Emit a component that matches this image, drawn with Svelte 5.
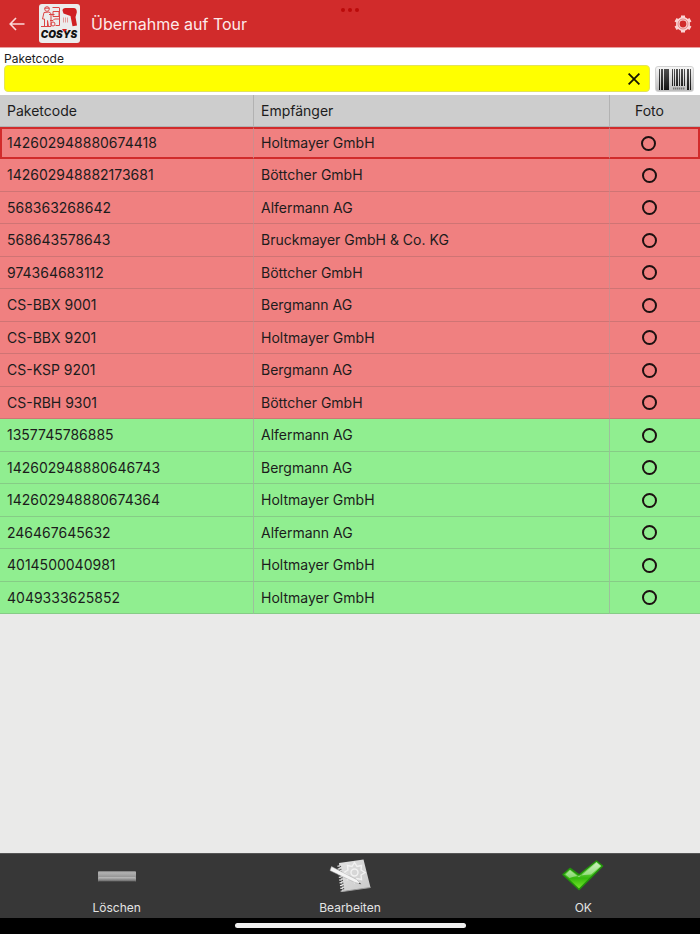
<script>
	let code = $state('');
	let selected = $state('142602948880674418');

	let parcels = $state([
		{ code: '142602948880674418', receiver: 'Holtmayer GmbH', loaded: false, photo: false },
		{ code: '142602948882173681', receiver: 'Böttcher GmbH', loaded: false, photo: false },
		{ code: '568363268642', receiver: 'Alfermann AG', loaded: false, photo: false },
		{ code: '568643578643', receiver: 'Bruckmayer GmbH & Co. KG', loaded: false, photo: false },
		{ code: '974364683112', receiver: 'Böttcher GmbH', loaded: false, photo: false },
		{ code: 'CS-BBX 9001', receiver: 'Bergmann AG', loaded: false, photo: false },
		{ code: 'CS-BBX 9201', receiver: 'Holtmayer GmbH', loaded: false, photo: false },
		{ code: 'CS-KSP 9201', receiver: 'Bergmann AG', loaded: false, photo: false },
		{ code: 'CS-RBH 9301', receiver: 'Böttcher GmbH', loaded: false, photo: false },
		{ code: '1357745786885', receiver: 'Alfermann AG', loaded: true, photo: false },
		{ code: '142602948880646743', receiver: 'Bergmann AG', loaded: true, photo: false },
		{ code: '142602948880674364', receiver: 'Holtmayer GmbH', loaded: true, photo: false },
		{ code: '246467645632', receiver: 'Alfermann AG', loaded: true, photo: false },
		{ code: '4014500040981', receiver: 'Holtmayer GmbH', loaded: true, photo: false },
		{ code: '4049333625852', receiver: 'Holtmayer GmbH', loaded: true, photo: false }
	]);

	function removeSelected() {
		parcels = parcels.filter((p) => p.code !== selected);
	}

	// x, width, height of every bar on the scan button
	const bars = [
		[3, 1, 21], [5, 2, 21], [8, 4, 21], [12, 1, 21],
		[16, 1, 17], [18, 1, 17], [20, 2, 17], [23, 1, 17], [25, 2, 17], [28, 1, 17],
		[31, 2, 21], [34, 1, 21]
	];
</script>

<div class="page">
	<header>
		<button type="button" class="icon back" aria-label="Zurück">
			<svg width="16" height="14" viewBox="0 0 16 14" fill="none" stroke="#fbd9d9" stroke-width="1.6">
				<path d="M15.500 7H1.500M7 1L1.200 7L7 13" />
			</svg>
		</button>
		<svg class="logo" width="41" height="39" viewBox="0 0 41 39">
			<rect width="41" height="39" rx="3" fill="#ececec" />
			<g fill="none" stroke="#dc4444" stroke-width="1">
				<circle cx="8" cy="5" r="2.300" />
				<path d="M5.500 4.200h5M5 8.500L3.500 15h2v7.500h3v-6l1 6h2.500V9.500L10 8zM10 10.500h5.500M13.500 3.500h6.500M20.500 3.500v18h-4M14 7.500h6v5h-6zM2 22.500h10M11 16.500h3l1.500-1.500h5" />
				<circle cx="14" cy="20" r="2" />
			</g>
			<path d="M23.500 6.500c0-1.500 1-2.500 3-2.500h8c2.500 0 3.500 2 3.300 4.500L36.500 13l1.500 8.500-4.500.8-2-10.300-7-2.500z" fill="#d01f22" />
			<path d="M24.500 13.500v5M26.500 13.500v5M28.500 13.500v5" stroke="#e49a9a" />
			<text class="brand" x="20" y="34" text-anchor="middle">COSYS</text>
			<path d="M23 25h5l-2.500 3.500z" fill="#d01f22" />
		</svg>
		<h1>Übernahme auf Tour</h1>
		<span class="dots"><i></i><i></i><i></i></span>
		<button type="button" class="icon" aria-label="Einstellungen">
			<svg width="18" height="18" viewBox="0 0 18 18">
				<circle cx="9" cy="9" r="5.200" fill="none" stroke="#fad4d4" stroke-width="3.600" />
				<path d="M9 .4v3M9 14.600v3M1.550 4.700l2.600 1.500M13.850 11.800l2.600 1.500M16.450 4.700l-2.600 1.500M4.150 11.800l-2.600 1.500" stroke="#fad4d4" stroke-width="4" />
				<circle cx="9" cy="9" r="5" fill="none" stroke="#dc6f6f" stroke-width=".8" />
			</svg>
		</button>
	</header>

	<form class="scan" onsubmit={(e) => e.preventDefault()}>
		<label for="code">Paketcode</label>
		<div class="line">
			<div class="field">
				<input id="code" type="text" bind:value={code} autocomplete="off" />
				<button type="button" class="icon" aria-label="Eingabe löschen" onclick={() => (code = '')}>
					<svg width="12" height="12" viewBox="0 0 12 12" stroke="#151500" stroke-width="1.800">
						<path d="M.6.600l10.800 10.800M11.400.600L.6 11.400" />
					</svg>
				</button>
			</div>
			<button type="submit" class="barcode" aria-label="Barcode scannen">
				<svg width="37" height="24" viewBox="0 0 37 24">
					<defs>
						<linearGradient id="ink" gradientUnits="userSpaceOnUse" x1="0" y1="0" x2="0" y2="24">
							<stop offset="0" stop-color="#555" />
							<stop offset="1" stop-color="#111" />
						</linearGradient>
					</defs>
					{#each bars as [x, width, height]}
						<rect {x} y="2" {width} {height} fill="url(#ink)" />
					{/each}
					<path d="M17 21.500h12" stroke="#777" stroke-width="2" stroke-dasharray="1.400 .6" />
				</svg>
			</button>
		</div>
	</form>

	<main>
		<table>
			<colgroup>
				<col class="colCode" />
				<col />
				<col class="colPhoto" />
			</colgroup>
			<thead>
				<tr>
					<th scope="col">Paketcode</th>
					<th scope="col">Empfänger</th>
					<th scope="col" class="photo">Foto</th>
				</tr>
			</thead>
			<tbody>
				{#each parcels as parcel (parcel.code)}
					<tr
						class:loaded={parcel.loaded}
						class:selected={parcel.code === selected}
						onclick={() => (selected = parcel.code)}
					>
						<td>{parcel.code}</td>
						<td>{parcel.receiver}</td>
						<td class="photo">
							<input type="checkbox" bind:checked={parcel.photo} aria-label="Foto {parcel.code}" />
						</td>
					</tr>
				{/each}
			</tbody>
		</table>
	</main>

	<footer>
		<button type="button" onclick={removeSelected}>
			<svg width="44" height="36" viewBox="0 0 44 36">
				<defs>
					<linearGradient id="metal" x1="0" y1="0" x2="0" y2="1">
						<stop offset="0" stop-color="#777" />
						<stop offset=".15" stop-color="#b2b2b2" />
						<stop offset=".5" stop-color="#989898" />
						<stop offset=".65" stop-color="#aaa" />
						<stop offset="1" stop-color="#5c5c5c" />
					</linearGradient>
				</defs>
				<rect x="3" y="13" width="38" height="11" rx="1" fill="url(#metal)" />
				<path d="M4 19.500h36" stroke="#bbb" stroke-width=".7" />
				<path d="M3.500 23.500h37" stroke="#4a4a4a" />
			</svg>
			<span>Löschen</span>
		</button>
		<button type="button">
			<svg width="44" height="36" viewBox="0 0 44 36">
				<defs>
					<linearGradient id="paper" x1="0" y1="0" x2="1" y2="1">
						<stop offset="0" stop-color="#e2e2e2" />
						<stop offset="1" stop-color="#c9c9c9" />
					</linearGradient>
				</defs>
				<path d="M11 5L35.500 1.500L42.500 29.500L14.500 33.500z" fill="url(#paper)" />
				<path d="M14.500 33.500L42.500 29.500" stroke="#9b9b9b" />
				<g fill="none" stroke="#f2f2f2" stroke-width="1.400">
					<circle cx="26.500" cy="14.500" r="3.500" />
					<path d="M26.500 4.500l2.500 4 4.500-1-.5 4.500 4 2.500-4 2.500.5 4.500-4.500-1-2.500 4-2.500-4-4.500 1 .5-4.500-4-2.500 4-2.500-.5-4.500 4.500 1z" />
				</g>
				<path d="M12 8l3.500 25" stroke="#555" stroke-width="2" stroke-dasharray="1.200 1.600" />
				<path d="M10.500 7.500l3.500 26" stroke="#ececec" stroke-width="2.500" stroke-dasharray="1.200 1.600" />
				<path d="M3.500 8.500L28.500 21.500l4.500 4.500-6-1.500L2 12.500z" fill="#f4f4f4" stroke="#a5a5a5" stroke-width=".5" />
				<path d="M31.500 24.800l1.800 1.500-2.400-.5z" fill="#333" />
			</svg>
			<span>Bearbeiten</span>
		</button>
		<button type="button">
			<svg width="44" height="36" viewBox="0 0 44 36">
				<defs>
					<linearGradient id="tick" x1="0" y1="0" x2="0" y2="1">
						<stop offset="0" stop-color="#b5eda0" />
						<stop offset=".45" stop-color="#5acb35" />
						<stop offset=".6" stop-color="#35b90d" />
						<stop offset="1" stop-color="#7be82c" />
					</linearGradient>
				</defs>
				<path d="M2 16.500L9 10.500L18 17L35.500 3L41.500 8L18 31.500z" fill="url(#tick)" stroke="#21930a" stroke-width="1.600" stroke-linejoin="round" />
				<path d="M4.500 16.500L9 12.300L18 19.200L35.500 5L39.500 8L30 16.500Q16 17 8.500 20z" fill="#fff" opacity=".4" />
			</svg>
			<span>OK</span>
		</button>
	</footer>
	<div class="homeBar"><span></span></div>
</div>

<style>
	:global(body) {
		margin: 0;
		background: #eaeae9;
	}
	.page {
		display: flex;
		flex-direction: column;
		min-height: 100vh;
		font-family: Inter, 'Liberation Sans', sans-serif;
		font-size: 14px;
		color: #1c1c1c;
	}
	button {
		font: inherit;
		color: inherit;
		padding: 0;
		border: none;
		background: none;
		cursor: pointer;
	}
	svg {
		display: block;
	}

	header {
		position: relative;
		display: flex;
		align-items: center;
		box-sizing: border-box;
		height: 48px;
		padding: 0 8px;
		background: #d12b2b;
		border-bottom: 1px solid #e9a0a0;
		color: #fdeaea;
	}
	.icon {
		display: flex;
		align-items: center;
		justify-content: center;
		width: 18px;
		height: 24px;
	}
	.logo {
		margin: 0 11px 0 13px;
	}
	.brand {
		font-size: 10px;
		font-weight: 900;
		font-style: italic;
		fill: #111;
	}
	h1 {
		flex: 1;
		margin: 0;
		font-size: 16px;
		font-weight: 400;
	}
	.dots {
		position: absolute;
		top: 8px;
		left: 0;
		right: 0;
		display: flex;
		justify-content: center;
		gap: 3px;
	}
	.dots i {
		width: 4px;
		height: 4px;
		border-radius: 50%;
		background: #bb0a0a;
	}

	.scan {
		padding: 4px 6px 3px 4px;
		background: #fff;
	}
	.scan label {
		display: block;
		font-size: 12px;
		line-height: 13px;
	}
	.line {
		display: flex;
		align-items: center;
		gap: 5px;
	}
	.field {
		flex: 1;
		display: flex;
		align-items: center;
		box-sizing: border-box;
		height: 27px;
		padding-right: 6px;
		background: #ff0;
		border: 1px solid #e3e35a;
		border-radius: 4px;
	}
	.field input {
		flex: 1;
		min-width: 0;
		padding: 0 8px;
		border: none;
		outline: none;
		background: none;
		font: inherit;
	}
	.barcode {
		border: 1px solid #d2d2d2;
		border-radius: 3px;
		background: linear-gradient(#f6f6f6, #bdbdbd);
	}

	main {
		flex: 1;
	}
	table {
		width: 100%;
		table-layout: fixed;
		border-collapse: separate;
		border-spacing: 0;
	}
	.colCode {
		width: 254px;
	}
	.colPhoto {
		width: 90px;
	}
	th,
	td {
		box-sizing: border-box;
		height: 32px;
		padding: 0 7px;
		text-align: left;
		font-weight: 400;
		line-height: 20px;
		border-right: 1px solid #b2b2b2;
		border-bottom: 1px solid #cf7474;
	}
	th {
		background: #cdcdcd;
		border-color: #b2b2b2;
	}
	td {
		background: #f08080;
		border-right-color: #cf8c8c;
	}
	tr:nth-child(even) td {
		height: 33px;
	}
	.loaded td {
		background: #90ee90;
		border-color: #86cc86;
		border-right-color: #9cc09c;
	}
	.selected td {
		border-bottom: 2px solid #d12b2b;
		border-top: 2px solid #d12b2b;
	}
	.selected td:first-child {
		border-left: 2px solid #d12b2b;
		padding-left: 5px;
	}
	.selected td:last-child {
		border-right: 2px solid #d12b2b;
	}
	th:last-child,
	tr:not(.selected) td:last-child {
		border-right: none;
	}
	.photo {
		padding: 0 11px 0 0;
		text-align: center;
	}
	.photo input {
		appearance: none;
		display: block;
		box-sizing: border-box;
		width: 15px;
		height: 15px;
		margin: 0 auto;
		border: 2px solid #1c1010;
		border-radius: 50%;
	}
	.photo input:checked {
		background: #1c1010;
	}

	footer {
		display: grid;
		grid-template-columns: repeat(3, 1fr);
		background: #373737;
		color: #e4e4e4;
		border-top: 1px solid #555;
	}
	footer button {
		display: flex;
		flex-direction: column;
		align-items: center;
		gap: 8px;
		padding: 4px 0;
		font-size: 12px;
		line-height: 12px;
	}
	.homeBar {
		display: flex;
		justify-content: center;
		padding: 5px 0 6px;
		background: #000;
	}
	.homeBar span {
		width: 33%;
		height: 5px;
		border-radius: 3px;
		background: #f0f0f0;
	}
</style>
